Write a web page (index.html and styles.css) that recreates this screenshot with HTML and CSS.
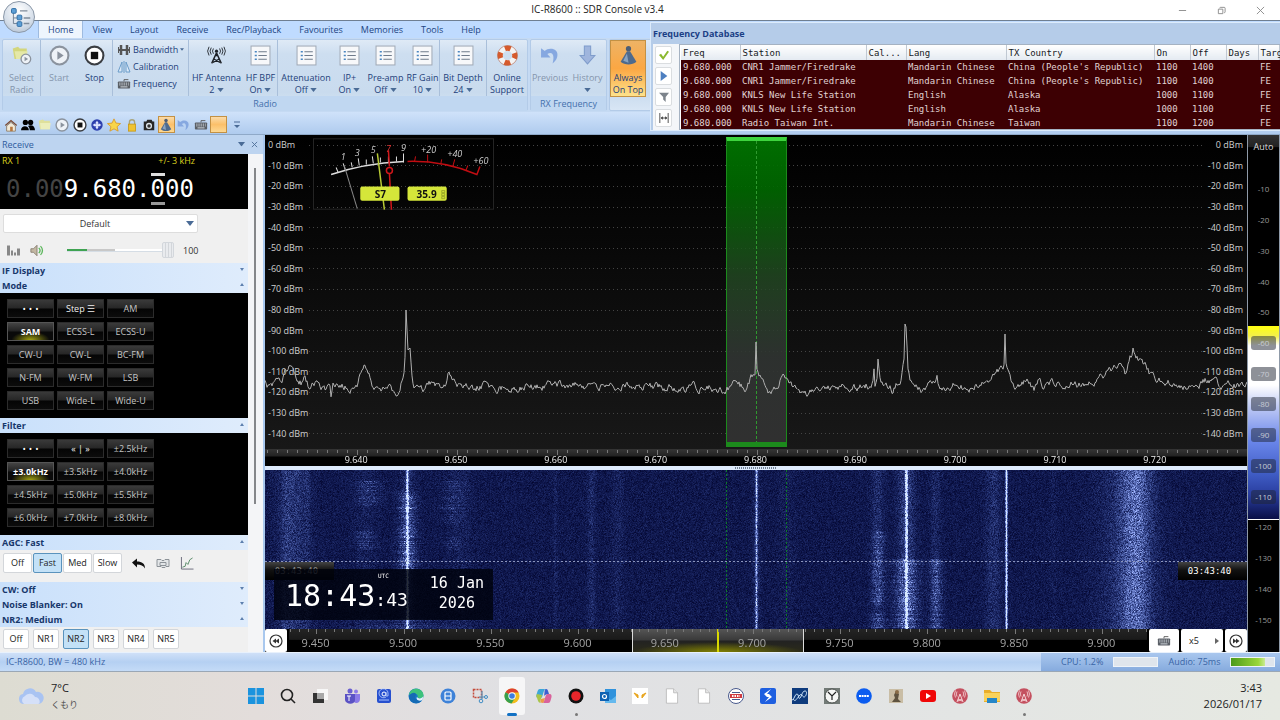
FILE: index.html
```html
<!DOCTYPE html>
<html lang="en">

<head>
    <meta charset="UTF-8">
    <meta name="viewport" content="width=device-width, initial-scale=1.0">
    <title>IC-R8600 :: SDR Console v3.4</title>
    <link rel="stylesheet" href="styles.css">
</head>

<body>
    <!-- shared icons -->
    <svg class="sprite" aria-hidden="true">
        <symbol id="i-list" viewBox="0 0 20 20">
            <rect x="1" y="1" width="18" height="18" fill="#f7f8fa" stroke="#a3acb8" />
            <path d="M8 6.500h8M8 10h8M8 13.500h8" stroke="#6f7b8b" />
            <path d="M4.500 6.500h2M4.500 10h2M4.500 13.500h2" stroke="#4a86c0" stroke-width="1.500" />
        </symbol>
        <symbol id="i-play" viewBox="0 0 20 20">
            <circle cx="10" cy="10" r="8.500" fill="#eef2f7" stroke="#8b939e" stroke-width="2" />
            <path d="M8 6l6 4-6 4z" fill="#8b939e" />
        </symbol>
        <symbol id="i-stop" viewBox="0 0 20 20">
            <circle cx="10" cy="10" r="8.500" fill="#fff" stroke="#3a3d42" stroke-width="2" />
            <rect x="6.500" y="6.500" width="7" height="7" fill="#111" />
        </symbol>
        <symbol id="i-keys" viewBox="0 0 16 12">
            <path d="M8 3V1h5" fill="none" stroke="#555" />
            <rect x="1" y="3" width="14" height="8" rx="1" fill="#5a5f66" />
            <path d="M2.500 5h11M2.500 7h11" stroke="#dfe5ec" stroke-dasharray="1.500 1" />
            <path d="M4 9.300h8" stroke="#dfe5ec" />
        </symbol>
        <symbol id="i-undo" viewBox="0 0 20 20">
            <path d="M1 3v9h9L7 8.500c4-2.500 7.500 0 5 9 6-4 7-14-2-14-2 0-4 .8-5.500 2.300z" fill="#86a8e0" />
        </symbol>
        <symbol id="i-pin" viewBox="0 0 20 20">
            <circle cx="10" cy="3.500" r="2.500" fill="#4d5e75" />
            <path d="M8.500 6h3l6 10c-4 3.500-11 3.500-15 0z" fill="#4e6a8d" />
            <path d="M8.500 8L5 15l5 2z" fill="#89a3c0" />
        </symbol>
        <symbol id="i-folder" viewBox="0 0 20 20">
            <path d="M1 4l6-2 2 2h8v12H3z" fill="#dfe09b" />
            <path d="M3 7h15l-1 9H4z" fill="#eceebb" />
        </symbol>
        <symbol id="i-down" viewBox="0 0 8 5">
            <path d="M0 0h8L4 5z" fill="#4a6b96" />
        </symbol>
        <symbol id="i-mast" viewBox="0 0 16 16">
            <circle cx="8" cy="8" r="7.800" fill="#c4505f" />
            <path d="M8 6l-3 8M8 6l3 8M6 11l4 2M10 11l-4 2" stroke="#f6d5d8" fill="none" />
            <path d="M5 3.500a5 5 0 0 0 0 5M11 3.500a5 5 0 0 1 0 5M3.500 2.500a7 7 0 0 0 0 7M12.500 2.500a7 7 0 0 1 0 7" stroke="#f6d5d8" fill="none" stroke-width=".8" />
        </symbol>
        <symbol id="i-page" viewBox="0 0 16 20">
            <path d="M1 1h9l5 5v13H1z" fill="#fff" stroke="#b5b5b5" />
            <path d="M10 1v5h5" fill="#e6e6e6" stroke="#b5b5b5" />
        </symbol>
    </svg>

    <header class="titlebar">
        <h1 class="title">IC-R8600 :: SDR Console v3.4</h1>
        <div class="win_buttons">
            <button type="button" aria-label="Minimize"><svg viewBox="0 0 10 10"><path d="M1 5h8" stroke="#888" /></svg></button>
            <button type="button" aria-label="Restore"><svg viewBox="0 0 10 10"><path d="M3 2.500a1 1 0 0 1 1-1h4a1 1 0 0 1 1 1v4a1 1 0 0 1-1 1M1.500 3.500h5v5h-5z" fill="none" stroke="#888" /></svg></button>
            <button type="button" aria-label="Close"><svg viewBox="0 0 10 10"><path d="M1 1l8 8M9 1l-8 8" stroke="#888" /></svg></button>
        </div>
        <button class="orb" type="button" aria-label="Application menu">
            <svg viewBox="0 0 32 32">
                <path d="M10 10v13h6M10 17h6" fill="none" stroke="#6e7f92" />
                <path d="M17 9.500h8M21 17h7M21 23h6" stroke="#7f8c9b" stroke-width="1.500" />
                <rect x="8" y="7" width="5" height="5" rx="1" fill="#5c9fd6" stroke="#2f6ca3" />
                <rect x="14" y="14" width="5" height="5" rx="1" fill="#5c9fd6" stroke="#2f6ca3" />
                <rect x="14" y="21" width="5" height="5" rx="1" fill="#5c9fd6" stroke="#2f6ca3" />
            </svg>
        </button>
    </header>

    <nav class="tabs">
        <a href="#" class="tab active">Home</a>
        <a href="#" class="tab">View</a>
        <a href="#" class="tab">Layout</a>
        <a href="#" class="tab">Receive</a>
        <a href="#" class="tab">Rec/Playback</a>
        <a href="#" class="tab">Favourites</a>
        <a href="#" class="tab">Memories</a>
        <a href="#" class="tab">Tools</a>
        <a href="#" class="tab">Help</a>
    </nav>

    <div class="ribbon">
        <section class="group">
            <div class="tools radio_tools">
                <button type="button" class="tool" disabled><svg class="icon" viewBox="0 0 24 22"><path d="M2 3l6-2 2 2h8v12H4z" fill="#d3d67c" /><path d="M4 6h15l-2 9H6z" fill="#e5e8a8" /><circle cx="17" cy="15" r="5.500" fill="#eef2f7" stroke="#8b939e" stroke-width="1.500" /><path d="M15.500 12.500l4 2.500-4 2.500z" fill="#8b939e" /></svg><span>Select</span><span>Radio</span></button>
                <button type="button" class="tool line" disabled><svg class="icon"><use href="#i-play" /></svg><span>Start</span></button>
                <button type="button" class="tool"><svg class="icon"><use href="#i-stop" /></svg><span>Stop</span></button>
                <div class="stack line">
                    <button type="button"><svg viewBox="0 0 14 12"><path d="M1 5h12v2H1z" fill="#555" /><path d="M4 1v10M10 1v10" stroke="#555" stroke-width="2.500" /><path d="M1.500 3v6M12.500 3v6" stroke="#555" /></svg>Bandwidth<svg class="tiny"><use href="#i-down" /></svg></button>
                    <button type="button"><svg viewBox="0 0 14 12"><path d="M1 11L5 1v10zM13 11L9 1v10z" fill="#dbe9f8" stroke="#6a9cc9" /><path d="M7 0v12" stroke="#6a9cc9" /></svg>Calibration</button>
                    <button type="button"><svg viewBox="0 0 16 12"><use href="#i-keys" /></svg>Frequency</button>
                </div>
                <button type="button" class="tool line"><svg class="icon" viewBox="0 0 24 24"><path d="M12 9L6.500 21M12 9l5.500 12M9 16l7 4M15 16l-7 4M10 12h4" stroke="#1c2026" stroke-width="1.600" fill="none" /><circle cx="12" cy="7" r="1.800" fill="#1c2026" /><path d="M8.500 4a5 5 0 0 0 0 6M15.500 4a5 5 0 0 1 0 6M6 3a7 7 0 0 0 0 8M18 3a7 7 0 0 1 0 8M3.500 2a9 9 0 0 0 0 10M20.500 2a9 9 0 0 1 0 10" stroke="#1c2026" fill="none" /></svg><span>HF Antenna</span><span>2 <svg class="caret"><use href="#i-down" /></svg></span></button>
                <button type="button" class="tool"><svg class="icon"><use href="#i-list" /></svg><span>HF BPF</span><span>On <svg class="caret"><use href="#i-down" /></svg></span></button>
                <button type="button" class="tool line"><svg class="icon"><use href="#i-list" /></svg><span>Attenuation</span><span>Off <svg class="caret"><use href="#i-down" /></svg></span></button>
                <button type="button" class="tool"><svg class="icon"><use href="#i-list" /></svg><span>IP+</span><span>On <svg class="caret"><use href="#i-down" /></svg></span></button>
                <button type="button" class="tool"><svg class="icon"><use href="#i-list" /></svg><span>Pre-amp</span><span>Off <svg class="caret"><use href="#i-down" /></svg></span></button>
                <button type="button" class="tool"><svg class="icon"><use href="#i-list" /></svg><span>RF Gain</span><span>10 <svg class="caret"><use href="#i-down" /></svg></span></button>
                <button type="button" class="tool line"><svg class="icon"><use href="#i-list" /></svg><span>Bit Depth</span><span>24 <svg class="caret"><use href="#i-down" /></svg></span></button>
                <button type="button" class="tool line"><svg class="icon" viewBox="0 0 20 20"><circle cx="10" cy="10" r="7" fill="none" stroke="#f3f3f3" stroke-width="5" /><circle cx="10" cy="10" r="7" fill="none" stroke="#d65a2c" stroke-width="5" stroke-dasharray="5.500 5.500" stroke-dashoffset="2.700" /><circle cx="10" cy="10" r="9.500" fill="none" stroke="#b5674c" stroke-width=".6" /></svg><span>Online</span><span>Support</span></button>
            </div>
            <h2 class="group_name">Radio</h2>
        </section>
        <section class="group">
            <div class="tools rx_tools">
                <button type="button" class="tool" disabled><svg class="icon"><use href="#i-undo" /></svg><span>Previous</span></button>
                <button type="button" class="tool" disabled><svg class="icon" viewBox="0 0 20 20"><path d="M7 1h6v9h4l-7 8-7-8h4z" fill="#9fb5dd" stroke="#7f9ccb" /></svg><span>History</span><span><svg class="caret"><use href="#i-down" /></svg></span></button>
            </div>
            <h2 class="group_name">RX Frequency</h2>
        </section>
        <section class="group">
            <div class="tools top_tools">
                <button type="button" class="tool pressed"><svg class="icon"><use href="#i-pin" /></svg><span>Always</span><span>On Top</span></button>
            </div>
        </section>
    </div>

    <div class="quickbar">
        <div class="quick_icons">
            <button type="button" aria-label="Home"><svg viewBox="0 0 16 16"><path d="M8 2l7 6-1 1-6-5-6 5-1-1z" fill="#7a4a35" /><path d="M3 9l5-4 5 4v6H3z" fill="#f2ead8" stroke="#8b7a66" /><path d="M7 10h3v5H7z" fill="#b5763f" /></svg></button>
            <button type="button" aria-label="Users"><svg viewBox="0 0 16 16"><circle cx="5" cy="5" r="3" /><circle cx="11" cy="5" r="3" /><path d="M0 14c0-6 9-6 9 0zM8 9c4-2 8 0 8 5h-6c0-2-.5-3.500-2-5z" /></svg></button>
            <button type="button" aria-label="Open"><svg viewBox="0 0 20 20"><use href="#i-folder" /></svg></button>
            <button type="button" aria-label="Start"><svg><use href="#i-play" /></svg></button>
            <button type="button" aria-label="Stop"><svg><use href="#i-stop" /></svg></button>
            <button type="button" aria-label="Centre"><svg viewBox="0 0 16 16"><circle cx="8" cy="8" r="6.500" fill="#2d3fae" /><path d="M8 3l2 3H9v1h1V6l3 2-3 2V9H9v1h1l-2 3-2-3h1V9H6v1L3 8l3-2v1h1V6H6z" fill="#dfe6ff" /></svg></button>
            <button type="button" aria-label="Favourite"><svg viewBox="0 0 16 16"><path d="M8 1l2.200 4.800 5.300.6-4 3.500 1.200 5.100L8 12.400 3.300 15l1.200-5.100-4-3.500 5.300-.6z" fill="#f8d54a" stroke="#d99a2b" /></svg></button>
            <button type="button" aria-label="Lock"><svg viewBox="0 0 16 16"><path d="M5 8V5a3 3 0 0 1 6 0v3" fill="none" stroke="#a8a47c" stroke-width="1.500" /><rect x="4" y="7" width="8" height="8" fill="#f0c330" stroke="#c79a1c" /></svg></button>
            <button type="button" aria-label="Snapshot"><svg viewBox="0 0 16 16"><path d="M2 4h3l1-2h5l1 2h2v10H2z" fill="#262626" /><circle cx="8" cy="9" r="3.500" fill="#dfe5ea" /><circle cx="8" cy="9" r="2" fill="#333" /></svg></button>
            <button type="button" class="pressed" aria-label="Always on top"><svg><use href="#i-pin" /></svg></button>
            <button type="button" aria-label="Undo"><svg><use href="#i-undo" /></svg></button>
            <button type="button" aria-label="Keyboard"><svg><use href="#i-keys" /></svg></button>
            <button type="button" class="pressed" aria-label="Blank"></button>
        </div>
        <svg class="more" viewBox="0 0 6 8"><path d="M0 1h6" stroke="#4a6b96" /><path d="M0 4h6L3 7z" fill="#4a6b96" /></svg>
    </div>

    <!-- floating database window -->
    <aside class="db">
        <h2 class="db_title">Frequency Database</h2>
        <div class="db_body">
            <div class="db_tools">
                <button type="button" aria-label="Accept"><svg viewBox="0 0 12 12"><path d="M0 6l2.500-1.500L5 8l5-7 2 1-7 10z" fill="#8ab82f" /></svg></button>
                <button type="button" aria-label="Play"><svg viewBox="0 0 12 12"><path d="M2 0l8 6-8 6z" fill="#4d7fc0" /></svg></button>
                <button type="button" aria-label="Filter"><svg viewBox="0 0 12 12"><path d="M0 1h12L8 6v6L5 9V6z" fill="#7d848c" /></svg></button>
                <button type="button" aria-label="Fit"><svg viewBox="0 0 12 12"><path d="M1 0v12M11 0v12M3 6h6" stroke="#333" fill="none" /><path d="M2 6l2.500-2v4zM10 6L7.500 4v4z" fill="#333" /></svg></button>
            </div>
            <div class="db_scroll">
                <table class="db_table">
                    <colgroup>
                        <col class="c_freq"><col class="c_station"><col class="c_call"><col class="c_lang"><col class="c_country"><col class="c_time"><col class="c_time"><col class="c_days"><col>
                    </colgroup>
                    <thead>
                        <tr><th>Freq</th><th>Station</th><th>Cal...</th><th>Lang</th><th>TX Country</th><th>On</th><th>Off</th><th>Days</th><th>Target</th></tr>
                    </thead>
                    <tbody>
                        <tr><td>9.680.000</td><td>CNR1 Jammer/Firedrake</td><td></td><td>Mandarin Chinese</td><td>China (People's Republic)</td><td>1100</td><td>1400</td><td></td><td>FE</td></tr>
                        <tr><td>9.680.000</td><td>CNR1 Jammer/Firedrake</td><td></td><td>Mandarin Chinese</td><td>China (People's Republic)</td><td>1100</td><td>1400</td><td></td><td>FE</td></tr>
                        <tr><td>9.680.000</td><td>KNLS New Life Station</td><td></td><td>English</td><td>Alaska</td><td>1000</td><td>1100</td><td></td><td>FE</td></tr>
                        <tr><td>9.680.000</td><td>KNLS New Life Station</td><td></td><td>English</td><td>Alaska</td><td>1000</td><td>1100</td><td></td><td>FE</td></tr>
                        <tr><td>9.680.000</td><td>Radio Taiwan Int.</td><td></td><td>Mandarin Chinese</td><td>Taiwan</td><td>1100</td><td>1200</td><td></td><td>FE</td></tr>
                    </tbody>
                </table>
            </div>
        </div>
    </aside>

    <main class="main">
        <section class="receive">
            <div class="dock_head">
                <h2>Receive</h2>
                <svg viewBox="0 0 8 5"><use href="#i-down" /></svg>
                <svg viewBox="0 0 8 8"><path d="M1 1l6 6M7 1L1 7" stroke="#4a6b96" /></svg>
            </div>
            <div class="dock_body">
                <div class="panels">
                    <div class="rx">
                        <div class="rx_info"><span>RX 1</span><span>+/- 3 kHz</span></div>
                        <div class="rx_freq"><span class="dim">0.00</span>9.680.<span class="step">0</span>00</div>
                    </div>
                    <div class="audio">
                        <div class="preset">
                            <select aria-label="Preset">
                                <option>Default</option>
                            </select>
                            <svg><use href="#i-down" /></svg>
                        </div>
                        <div class="volume">
                            <svg viewBox="0 0 14 12"><path d="M0 1h3v10H0zM4 6h2v5H4zM7 8h2v3H7zM10 4h3v7h-3z" fill="#888" /></svg>
                            <svg viewBox="0 0 16 14"><path d="M1 5h3l4-4v12L4 9H1z" fill="#c3b8a3" stroke="#857c6e" /><path d="M10 4c2 2 2 4 0 6M12 2c3 3 3 7 0 10" fill="none" stroke="#59b559" stroke-width="1.500" /></svg>
                            <input type="range" class="slider" aria-label="Volume" min="0" max="100" value="100">
                            <span>100</span>
                        </div>
                    </div>
                    <h3 class="fold">IF Display</h3>
                    <h3 class="fold open">Mode</h3>
                    <div class="pad">
                        <button type="button" class="dots"><span>•</span><span>•</span><span>•</span></button><button type="button" class="bright">Step ☰</button><button type="button">AM</button>
                        <button type="button" class="on">SAM</button><button type="button">ECSS-L</button><button type="button">ECSS-U</button>
                        <button type="button">CW-U</button><button type="button">CW-L</button><button type="button">BC-FM</button>
                        <button type="button">N-FM</button><button type="button">W-FM</button><button type="button">LSB</button>
                        <button type="button">USB</button><button type="button">Wide-L</button><button type="button">Wide-U</button>
                    </div>
                    <h3 class="fold open">Filter</h3>
                    <div class="pad">
                        <button type="button" class="dots"><span>•</span><span>•</span><span>•</span></button><button type="button" class="bright">« | »</button><button type="button">±2.5kHz</button>
                        <button type="button" class="on">±3.0kHz</button><button type="button">±3.5kHz</button><button type="button">±4.0kHz</button>
                        <button type="button">±4.5kHz</button><button type="button">±5.0kHz</button><button type="button">±5.5kHz</button>
                        <button type="button">±6.0kHz</button><button type="button">±7.0kHz</button><button type="button">±8.0kHz</button>
                    </div>
                    <h3 class="fold open">AGC: Fast</h3>
                    <div class="choices agc">
                        <button type="button">Off</button><button type="button" class="chosen">Fast</button><button type="button">Med</button><button type="button">Slow</button>
                        <svg viewBox="0 0 14 12"><path d="M0 5l5-4v3c5 0 8 2 8 7-2-3-4-4-8-4v3z" fill="#111" /></svg>
                        <svg viewBox="0 0 14 12"><path d="M1 2h4l1 1h2l1-1h4v7h-3l-1 1H6L5 9H1zM4 5h6v3H4z" fill="#e3e6e8" stroke="#8c9298" /></svg>
                        <svg viewBox="0 0 14 14"><path d="M1 0v13h13" fill="none" stroke="#667" /><path d="M2 11l3-1 1-4 2 2 2-5 3-2" fill="none" stroke="#586" /></svg>
                    </div>
                    <h3 class="fold">CW: Off</h3>
                    <h3 class="fold">Noise Blanker: On</h3>
                    <h3 class="fold open">NR2: Medium</h3>
                    <div class="choices nr">
                        <button type="button">Off</button><button type="button">NR1</button><button type="button" class="chosen">NR2</button><button type="button">NR3</button><button type="button">NR4</button><button type="button">NR5</button>
                    </div>
                </div>
                <div class="scrollbar"><i></i></div>
            </div>
        </section>

        <section class="display">
            <div class="spectrum">
                <div class="levels" id="levels"></div>
                <div class="passband"><i></i></div>
                <canvas id="trace"></canvas>
                <svg class="meter" viewBox="0 0 180 71">
                    <rect x=".5" y=".5" width="179" height="70" fill="none" stroke="#242424" />
                    <path d="M18 36Q50 25 90 23" fill="none" stroke="#ddd" stroke-width="1.500" />
                    <path d="M25 34l-2-5M32 31l-2-6M39 29l-1-5M46 27l-1-7M53 26v-5M60 25l-1-7M67 24v-5M75 24v-6M83 23v-5M90 24v-9" stroke="#ddd" fill="none" />
                    <path d="M94 23Q130 22 163 36l3-8" fill="none" stroke="#c00d12" stroke-width="1.500" />
                    <path d="M101 23l1-5M114 24v-8M127 26l1-5M139 28l2-7M152 32l2-5" stroke="#c00d12" fill="none" />
                    <path d="M31 27l13 43" stroke="#888" />
                    <path d="M64 15l7 56" stroke="#b9cb35" stroke-width="1.500" />
                    <path d="M75 12l1 16M76 35l2 36" stroke="#d0161a" stroke-width="1.500" />
                    <circle cx="76" cy="32" r="3" fill="none" stroke="#d0161a" stroke-width="1.500" />
                    <g class="meter_text">
                        <text x="30" y="22">1</text><text x="44" y="18">3</text><text x="60" y="15">5</text><text x="75" y="14" class="red">7</text><text x="90" y="13">9</text>
                        <text x="115" y="15">+20</text><text x="141" y="19">+40</text><text x="167" y="26">+60</text>
                    </g>
                    <rect x="47" y="48" width="39" height="14" rx="2" fill="#d5e63a" />
                    <rect x="94" y="48" width="39" height="14" rx="2" fill="#d5e63a" />
                    <g class="meter_value"><text x="67" y="59">S7</text><text x="113" y="59">35.9</text></g>
                    <path d="M128 52h3v2h-3zM128 55h3v2h-3zM128 58h3v2h-3z" fill="none" stroke="#7d8a20" stroke-width=".6" />
                </svg>
            </div>
            <div class="axis">
                <canvas id="ticks"></canvas>
                <div class="axis_labels"><span>9.640</span><span>9.650</span><span>9.660</span><span>9.670</span><span>9.680</span><span>9.690</span><span>9.700</span><span>9.710</span><span>9.720</span></div>
            </div>
            <div class="splitter"><i></i></div>
            <div class="waterfall">
                <canvas id="waterfall"></canvas>
                <div class="stamp left">03:43:40</div>
                <div class="stamp right">03:43:40</div>
                <div class="clock">
                    <div class="time"><small>UTC</small>18:43<span>:43</span></div>
                    <div class="date">16 Jan<br>2026</div>
                </div>
            </div>
            <div class="navigator">
                <button type="button" aria-label="Back"><svg viewBox="0 0 14 14"><circle cx="7" cy="7" r="6" fill="none" stroke="#333" stroke-width="1.200" /><path d="M7 4.500v5L3.500 7zM10 4.500v5L6.500 7z" fill="#333" /></svg></button>
                <div class="range">
                    <div class="window"><i></i></div>
                    <canvas id="range_ticks"></canvas>
                    <div class="range_labels"><span>9.450</span><span>9.500</span><span>9.550</span><span>9.600</span><span>9.650</span><span>9.700</span><span>9.750</span><span>9.800</span><span>9.850</span><span>9.900</span></div>
                </div>
                <button type="button" class="keys" aria-label="Keypad"><svg viewBox="0 0 16 12"><use href="#i-keys" /></svg></button>
                <button type="button" class="zoom"><span>x5</span><svg viewBox="0 0 4 6"><path d="M0 0l4 3-4 3z" fill="#666" /></svg></button>
                <button type="button" aria-label="Forward"><svg viewBox="0 0 14 14"><circle cx="7" cy="7" r="6" fill="none" stroke="#333" stroke-width="1.200" /><path d="M4 4.500v5L7.500 7zM7 4.500v5L10.500 7z" fill="#333" /></svg></button>
            </div>
        </section>

        <section class="scale">
            <button type="button" class="auto">Auto</button>
            <div class="scale_bar">
                <span>-10</span><span>-20</span><span>-30</span><span>-40</span><span>-50</span><span class="chip">-60</span><span class="chip">-70</span><span class="chip">-80</span><span class="chip">-90</span><span class="chip">-100</span><span class="chip">-110</span><span>-120</span><span>-130</span><span>-140</span><span>-150</span>
            </div>
        </section>
    </main>

    <footer class="status">
        <span>IC-R8600, BW = 480 kHz</span>
        <div class="load">
            <span>CPU: 1.2%</span><i class="bar"></i>
            <span>Audio: 75ms</span><i class="bar"><b></b></i>
        </div>
    </footer>

    <div class="taskbar">
        <div class="weather">
            <svg viewBox="0 0 26 18"><path d="M6 17a5 5 0 0 1-1-9.900A7 7 0 0 1 18 5a5.500 5.500 0 0 1 3 12z" fill="#a9c3f2" /><path d="M6 17a4.500 4.500 0 0 1 1-8 6 6 0 0 1 10 1c5 0 6 7 3 7z" fill="#d5e0f8" /></svg>
            <div>7°C<br><span>くもり</span></div>
        </div>
        <div class="apps">
            <button type="button" aria-label="Start"><svg viewBox="0 0 16 16"><path d="M0 0h7.500v7.500H0zM8.500 0H16v7.500H8.500zM0 8.500h7.500V16H0zM8.500 8.500H16V16H8.500z" fill="#1b93de" /></svg></button>
            <button type="button" aria-label="Search"><svg viewBox="0 0 16 16"><circle cx="7" cy="7" r="5.500" fill="none" stroke="#222" stroke-width="1.600" /><path d="M11 11l4 4" stroke="#222" stroke-width="1.600" /></svg></button>
            <button type="button" aria-label="Task view"><svg viewBox="0 0 16 16"><path d="M5 1h11v11H5z" fill="#f7f7f7" /><path d="M1 5h11v10H1z" fill="#333" /><path d="M5 5h7v6H5z" fill="#a8a8a8" /></svg></button>
            <button type="button" aria-label="Teams"><svg viewBox="0 0 16 16"><circle cx="6" cy="3" r="2.500" fill="#6a5fd0" /><circle cx="12" cy="3.500" r="2" fill="#8c7be8" /><path d="M9 6h7v5c0 4-4 5-6 3z" fill="#8c7be8" /><path d="M1 6h10v6c0 5-9 5-10 0z" fill="#5b52c4" /><path d="M3 8h4M5 8v5" stroke="#fff" /></svg></button>
            <button type="button" aria-label="Mail"><svg viewBox="0 0 16 16"><rect x="1" y="1" width="14" height="14" rx="2" fill="#2750cf" /><path d="M3 12h10" stroke="#a7c1ff" /><circle cx="8" cy="6" r="2" fill="none" stroke="#fff" /><path d="M10 4v4h2V5a4.500 4.500 0 1 0-2 4" fill="none" stroke="#bcd0ff" stroke-width=".8" /></svg></button>
            <button type="button" aria-label="Edge"><svg viewBox="0 0 16 16"><circle cx="8" cy="8" r="7.500" fill="#1577c8" /><path d="M1 7C2-2 16-1 15.500 8c0 3-5 3-6 1 1-3-3-5-8.500-2z" fill="#3dc27c" /><path d="M1 8c3-4 7-4 7-1-3 3 1 7 6 5-4 6-13 3-13-4z" fill="#156bb5" /><path d="M9 9c1 2 5 2 6.500-1l-1 4c-4 2-7-1-5.500-3z" fill="#e6f3fb" /></svg></button>
            <button type="button" aria-label="Binance"><svg viewBox="0 0 16 16"><circle cx="8" cy="8" r="7.500" fill="#3e82d8" /><rect x="5" y="4" width="6" height="8" rx="1" fill="none" stroke="#fff" stroke-width="1.200" /><path d="M5 8h6" stroke="#fff" /></svg></button>
            <button type="button" aria-label="Snipping tool"><svg viewBox="0 0 16 16"><rect x="1.500" y="1.500" width="8" height="8" fill="none" stroke="#c44b3b" stroke-width="1.500" stroke-dasharray="2 1" /><path d="M10 3v8M7 9h6" stroke="#5b8fb5" stroke-width="1.200" /><circle cx="9" cy="13" r="1.800" fill="none" stroke="#3f8cc4" /><circle cx="14" cy="9" r="1.500" fill="none" stroke="#3f8cc4" /></svg></button>
            <button type="button" class="current" aria-label="Chrome"><svg viewBox="0 0 16 16"><circle cx="8" cy="8" r="7.500" fill="#f2bd1d" /><path d="M8 8L1.500 4.200A7.500 7.500 0 0 1 14.700 4.500H8z" fill="#dd4132" /><path d="M8 8L1.500 4.200A7.500 7.500 0 0 0 7.500 15.500L11 10z" fill="#36a04f" /><circle cx="8" cy="8" r="3.700" fill="#fff" /><circle cx="8" cy="8" r="2.800" fill="#3c7ce0" /></svg></button>
            <button type="button" aria-label="Copilot"><svg viewBox="0 0 16 16"><path d="M4 1h6c-2 0-2 2-3 5s-1 4-3 4H3C0 10 0 8 1 5s1-4 3-4z" fill="#3ca6d8" /><path d="M1 6l5 1-1 4c-1 2-1 3 0 4-3 0-3-3-4-5s-1-2 0-4z" fill="#a9c44a" /><path d="M12 15H6c2 0 2-2 3-5s1-4 3-4h1c3 0 3 2 2 5s-1 4-3 4z" fill="#d9629c" /><path d="M6 15c2 0 2-2 3-5l-4 1c-1 2-1 3 1 4z" fill="#eb9a48" /><path d="M10 1c2 0 2 2 3 5h-1c-2 0-3 1-4 2 1-4 0-7 2-7z" fill="#3b5fd0" /></svg></button>
            <button type="button" class="open" aria-label="Recorder"><svg viewBox="0 0 16 16"><circle cx="8" cy="8" r="7.500" fill="#111" /><circle cx="8" cy="8" r="4.800" fill="#e8262b" /></svg></button>
            <button type="button" aria-label="Outlook"><svg viewBox="0 0 16 16"><path d="M5 1h11v14H5z" fill="#2f92dc" /><path d="M5 9l6 3 5-4v7H5z" fill="#65b9ee" /><rect x="0" y="4" width="9" height="9" fill="#0f62b2" /><circle cx="4.500" cy="8.500" r="2" fill="none" stroke="#fff" stroke-width="1.200" /></svg></button>
            <button type="button" aria-label="Viewer"><svg viewBox="0 0 16 16"><path d="M0 0h16v16H0z" fill="#fff" /><path d="M2 5l4 5V7zM14 5l-4 5V7z" fill="#e8a51d" stroke="#e8a51d" /></svg></button>
            <button type="button" aria-label="Document"><svg><use href="#i-page" /></svg></button>
            <button type="button" aria-label="Document"><svg><use href="#i-page" /></svg></button>
            <button type="button" aria-label="DX"><svg viewBox="0 0 16 16"><circle cx="8" cy="8" r="7.500" fill="#fff" stroke="#48598c" /><path d="M2 6h12v4H2z" fill="#d03b40" /><path d="M4 8h8" stroke="#fff" stroke-dasharray="1.500 1" stroke-width="2" /><path d="M4 4.500h8M4 11.500h8" stroke="#48598c" /></svg></button>
            <button type="button" aria-label="Sync"><svg viewBox="0 0 16 16"><rect x="0" y="0" width="16" height="16" rx="2" fill="#1e5fe0" /><path d="M11 1L4 6l3 3h2l-4 5 7-5-3-3H7z" fill="#fff" /></svg></button>
            <button type="button" aria-label="Wave"><svg viewBox="0 0 16 16"><path d="M0 0h16v16H0z" fill="#0e3b7d" /><path d="M0 12c2 0 3-6 5-6s1 6 3 4 2-7 5-7 1 6-1 6-2-5-5-1-4 6-6 3" fill="none" stroke="#cfe6fa" /></svg></button>
            <button type="button" aria-label="Timer"><svg viewBox="0 0 16 16"><path d="M0 0h16v16H0z" fill="#727a76" /><circle cx="8" cy="8" r="7" fill="#f5f6f4" stroke="#4b504d" /><path d="M4 4l4 4 4-4M8 8v4" fill="none" stroke="#222" stroke-width="1.200" /></svg></button>
            <button type="button" aria-label="Zoom"><svg viewBox="0 0 16 16"><circle cx="8" cy="8" r="7.800" fill="#0b5cf0" /><path d="M3 8h10" stroke="#fff" stroke-width="2" stroke-dasharray="2 .6" /></svg></button>
            <button type="button" aria-label="Picture"><svg viewBox="0 0 16 16"><path d="M1 1h14v14H1z" fill="#c9bda5" /><path d="M8 3l3 3-1 5 3 3H4l3-4-1-3z" fill="#5e523f" /><circle cx="9" cy="4" r="2" fill="#8a6c48" /></svg></button>
            <button type="button" aria-label="YouTube"><svg viewBox="0 0 16 16"><rect x="0" y="2" width="16" height="12" rx="3" fill="#f00707" /><path d="M6 5l5 3-5 3z" fill="#fff" /></svg></button>
            <button type="button" aria-label="SDR Console"><svg><use href="#i-mast" /></svg></button>
            <button type="button" aria-label="Explorer"><svg viewBox="0 0 16 16"><path d="M0 2h6l2 2h8v10H0z" fill="#e9ae2a" /><path d="M0 5h16v8H0z" fill="#fad25a" /><path d="M3 10h10v5H3z" fill="#2586c8" /></svg></button>
            <button type="button" class="open" aria-label="SDR Console"><svg><use href="#i-mast" /></svg></button>
        </div>
        <div class="now">3:43<br>2026/01/17</div>
    </div>
    <script src="spectrum.js"></script>
</body>

</html>
```

FILE: styles.css
```css
* {
    margin: 0;
    padding: 0;
    box-sizing: border-box;
}

body {
    display: flex;
    flex-direction: column;
    min-height: 100vh;
    position: relative;
    overflow-x: hidden;
    font: 9px/12px "Open Sans", "Noto Sans CJK JP", sans-serif;
    color: #1e3f7a;
    background: #bdd5f3;
}

button,
select {
    font: inherit;
    color: inherit;
    border: 0;
    background: none;
}

button {
    display: flex;
    align-items: center;
    justify-content: center;
}

h1,
h2,
h3 {
    font-size: inherit;
    font-weight: normal;
}

i {
    display: block;
}

.sprite {
    position: absolute;
    width: 0;
    height: 0;
}

/* title bar */
.titlebar {
    position: relative;
    display: flex;
    height: 20px;
    padding-left: 32px;
    background: #fff;
}

.title {
    flex: 1;
    text-align: center;
    font-size: 10px;
    line-height: 19px;
    color: #222;
}

.win_buttons {
    display: flex;
}

.win_buttons button {
    width: 39px;
}

.win_buttons svg {
    width: 9px;
    height: 9px;
}

.orb {
    position: absolute;
    left: 3px;
    top: 1px;
    z-index: 2;
    width: 32px;
    height: 32px;
    border: 1px solid #8b98a8;
    border-radius: 50%;
    background: radial-gradient(circle at 50% 30%, #fff, #d5dee9 60%, #a8b8cb);
}

.orb svg {
    width: 30px;
}

/* tabs */
.tabs {
    display: flex;
    height: 18px;
    padding-left: 38px;
    border-top: 1px solid #6f7f92;
    background: #bfdbff;
}

.tab {
    padding: 0 9px;
    line-height: 17px;
    color: #1d4583;
    text-decoration: none;
}

.tab.active {
    background: #eef5fd;
    border: 1px solid #9ebbe0;
    border-width: 0 1px;
}

/* ribbon */
.ribbon {
    display: flex;
    gap: 2px;
    height: 74px;
    padding: 1px 2px;
    background: #c5daf3;
}

.group {
    display: flex;
    flex-direction: column;
    border: 1px solid #b3cbe8;
    border-radius: 2px;
    background: linear-gradient(#dfeaf6, #cddef0 20%, #c9dbee 75%, #d8e6f5);
}

.group:last-child {
    flex: 1;
}

.tools {
    display: grid;
    height: 56px;
}

.radio_tools {
    grid-template-columns: 37px 37px 35px 76px 56px 33px 57px 31px 41px 33px 47px 41px;
}

.rx_tools {
    grid-template-columns: 38px 37px;
}

.top_tools {
    grid-template-columns: 36px;
}

.tool {
    flex-direction: column;
    justify-content: flex-start;
    padding-top: 5px;
    white-space: nowrap;
}

.tool .icon {
    width: 21px;
    height: 21px;
    margin-bottom: 6px;
    flex: none;
}

.tool:disabled {
    color: #8595ac;
}

.line {
    border-left: 1px solid #a9bfda;
}

.caret {
    width: 7px;
    height: 4px;
    vertical-align: 1px;
}

.tool.pressed,
.quick_icons .pressed {
    border: 1px solid #c39144;
    background: linear-gradient(#eeb365, #fba743 50%, #fee28b);
}

.tool.pressed {
    padding-top: 4px;
}

.stack {
    display: flex;
    flex-direction: column;
    padding: 1px 0 0 4px;
}

.stack button {
    justify-content: flex-start;
    gap: 2px;
    height: 17px;
}

.stack svg {
    width: 14px;
    height: 12px;
    flex: none;
}

.stack .tiny {
    width: 4px;
    height: 3px;
}

.group_name {
    flex: 1;
    text-align: center;
    line-height: 15px;
    color: #4470ac;
    background: #c0d7f1;
}

/* quick access bar */
.quickbar {
    display: flex;
    align-items: center;
    height: 23px;
    padding: 4px 2px 1px;
    border-bottom: 1px solid #8fa9c8;
    background: linear-gradient(#cfe2fa, #afcbee);
}

.quick_icons {
    display: flex;
    justify-content: space-between;
    width: 225px;
}

.quick_icons button {
    width: 17px;
    height: 17px;
}

.quick_icons svg {
    width: 14px;
    height: 14px;
}

.quick_icons .pressed {
    background: linear-gradient(#fbdba9, #fcc06a 50%, #fdd892);
}

.more {
    width: 6px;
    margin-left: 7px;
}

/* frequency database */
.db {
    position: absolute;
    left: 650px;
    right: 0;
    top: 22px;
    height: 109px;
    padding: 1px 0 2px 2px;
    border: 1px solid #dcebfb;
    border-right: 0;
    background: #b5cce9;
}

.db_title {
    line-height: 20px;
    font-weight: bold;
    color: #1b3f86;
}

.db_body {
    display: flex;
    height: 86px;
    background: #f4f6f9;
}

.db_tools {
    display: flex;
    flex-direction: column;
    gap: 3px;
    width: 26px;
    padding: 2px;
}

.db_tools button {
    width: 17px;
    height: 18px;
    border: 1px solid #dadde0;
    border-radius: 2px;
    background: #fff;
}

.db_tools svg {
    width: 10px;
}

.db_scroll {
    flex: 1;
    min-width: 0;
    overflow: hidden;
    border: 1px solid #a5b2c2;
    border-right: 0;
    padding-left: 1px;
    background: #fff;
}

.db_table {
    width: 100%;
    table-layout: fixed;
    border-collapse: collapse;
    font: 9px/14px "DejaVu Sans Mono", monospace;
    white-space: nowrap;
    color: #e0d2d2;
    background: #3d0003;
}

.db_table th {
    height: 15px;
    padding-left: 2px;
    text-align: left;
    font-weight: normal;
    color: #16191d;
    border-right: 1px solid #c0c8d2;
    background: linear-gradient(#fff, #e4eaf1);
}

.db_table td {
    padding-left: 2px;
    height: 14px;
}

.c_freq {
    width: 59px;
}

.c_station {
    width: 126px;
}

.c_call {
    width: 40px;
}

.c_lang {
    width: 100px;
}

.c_country {
    width: 148px;
}

.c_time {
    width: 36px;
}

.c_days {
    width: 32px;
}

/* main area */
.main {
    flex: 1;
    display: grid;
    grid-template-columns: 265px 1fr 33px;
}

.receive {
    display: flex;
    flex-direction: column;
    border-right: 2px solid #a9c8ee;
    background: #f0f0f0;
}

.dock_head {
    display: flex;
    align-items: center;
    gap: 6px;
    height: 19px;
    padding: 0 5px 0 2px;
    color: #2f5c9e;
    background: #bdd4f0;
}

.dock_head h2 {
    flex: 1;
}

.dock_head svg {
    width: 7px;
}

.dock_body {
    flex: 1;
    display: flex;
}

.panels {
    flex: 1;
}

.scrollbar {
    width: 15px;
    padding: 14px 6px;
    background: #f4f5f7;
}

.scrollbar i {
    width: 2px;
    height: 336px;
    background: #85878a;
}

.rx {
    height: 55px;
    background: #000;
}

.rx_info {
    display: flex;
    justify-content: space-between;
    padding: 1px 53px 0 2px;
    color: #d9cf1e;
}

.rx_freq {
    padding: 8px 0 0 6px;
    font: 24px/28px "DejaVu Sans Mono", monospace;
    color: #fff;
}

.rx_freq .dim {
    color: #444;
}

.rx_freq .step {
    padding: 2px 0;
    background: linear-gradient(#ddd, #ddd) top / 100% 3px no-repeat, linear-gradient(#999, #999) bottom / 100% 3px no-repeat;
}

.audio {
    height: 54px;
    padding: 5px 3px 0;
    color: #333;
}

.preset {
    display: flex;
    align-items: center;
    width: 195px;
    height: 19px;
    padding-right: 3px;
    border: 1px solid #ddd;
    border-radius: 2px;
    background: #fff;
}

.preset select {
    appearance: none;
    flex: 1;
    text-align-last: center;
}

.preset svg {
    width: 8px;
    height: 5px;
}

.volume {
    display: flex;
    align-items: center;
    height: 35px;
    padding-left: 4px;
}

.volume svg {
    width: 14px;
    height: 13px;
    margin-right: 9px;
}

.slider {
    appearance: none;
    width: 107px;
    height: 18px;
    margin: 0 9px 0 14px;
    background: none;
}

.slider::-webkit-slider-runnable-track {
    height: 3px;
    background: linear-gradient(90deg, #3fa352 20px, #c8c8c8 20px, #c8c8c8 48px, #fff 48px);
    border-bottom: 1px solid #d5dde5;
}

.slider::-webkit-slider-thumb {
    appearance: none;
    width: 12px;
    height: 16px;
    margin-top: -7px;
    border: 1px solid #d3d7dc;
    border-radius: 2px;
    background: repeating-linear-gradient(90deg, #e9ebee 0 2px, #d3d6da 2px 3px);
}

.fold {
    display: flex;
    justify-content: space-between;
    height: 15px;
    padding: 0 4px 0 2px;
    font-weight: bold;
    line-height: 15px;
    color: #17376b;
    background: linear-gradient(90deg, #c9e0fb, #dfecfc);
}

.fold::after {
    content: "";
    margin-top: 5px;
    width: 0;
    height: 0;
    border: 2px solid transparent;
    border-top: 3px solid #5d7fae;
}

.fold.open::after {
    margin-top: 3px;
    border: 2px solid transparent;
    border-bottom: 3px solid #5d7fae;
}

.pad {
    display: grid;
    grid-template-columns: repeat(3, 47px);
    grid-auto-rows: 19px;
    gap: 4px 3px;
    padding: 6px 7px 8px;
    background: #000;
}

.pad button {
    border: 1px solid #2c2c2c;
    color: #c4c4c4;
    background: linear-gradient(#3a3a3a, #262626 48%, #050505 52%, #0c0c0c);
}

.pad .on {
    font-weight: bold;
    color: #fff;
    border-color: #555;
    background: radial-gradient(ellipse at 50% 100%, #a0a010, transparent 60%) bottom / 100% 10px no-repeat, linear-gradient(#444, #222 48%, #0a0a0a 52%);
}

.pad .dots {
    gap: 3px;
    color: #fff;
}

.pad .bright {
    color: #f0f0f0;
}

.choices {
    display: flex;
    align-items: center;
    padding-left: 3px;
    color: #222;
}

.choices button {
    width: 29px;
    height: 20px;
    border: 1px solid #d3d6da;
    border-radius: 2px;
    background: #fff;
}

.choices .chosen {
    border-color: #5a93bd;
    background: #c3e1f7;
}

.agc {
    gap: 1px;
    height: 32px;
    padding-bottom: 6px;
}

.agc svg {
    width: 14px;
    height: 13px;
    margin-left: 9px;
}

.nr {
    gap: 4px;
    height: 24px;
}

.nr button {
    width: 26px;
}

/* spectrum and waterfall */
.display {
    display: flex;
    flex-direction: column;
    min-width: 0;
    color: #d0d0d0;
    background: #000;
}

canvas {
    position: absolute;
    inset: 0;
    width: 100%;
    height: 100%;
}

.spectrum {
    position: relative;
    flex: 1;
    display: flex;
    padding-bottom: 5px;
    background: linear-gradient(#000, #080808 35%, #181818);
}

.levels {
    flex: 1;
    display: grid;
    grid-auto-rows: 1fr;
}

.level {
    display: flex;
    align-items: center;
    padding: 0 4px 0 3px;
}

.level i {
    flex: 1;
    height: 1px;
    background: repeating-linear-gradient(90deg, #444 0 1px, transparent 1px 4px);
}

.level span {
    width: 41px;
}

.level span:last-child {
    text-align: right;
}

.passband {
    position: absolute;
    left: 50%;
    top: 2px;
    bottom: 2px;
    width: 61px;
    margin-left: -30px;
    border: 1px solid #1c8a1c;
    border-width: 4px 1px 5px;
    border-top-color: #3ed43e;
    background: linear-gradient(rgba(0, 115, 0, .95), rgba(0, 105, 0, .9) 16%, rgba(35, 75, 35, .8) 45%, rgba(48, 52, 50, .9) 72%, #303030);
}

.passband i {
    width: 1px;
    height: 100%;
    margin: 0 auto;
    background: repeating-linear-gradient(#2f9a2f 0 3px, transparent 3px 5px);
}

.meter {
    position: absolute;
    left: 48px;
    top: 3px;
    width: 181px;
    height: 72px;
}

.meter_text {
    font-size: 9px;
    font-style: italic;
    text-anchor: middle;
    fill: #ccc;
}

.meter_text .red {
    fill: #d33;
}

.meter_value {
    font-size: 10px;
    font-weight: bold;
    text-anchor: middle;
    fill: #111;
}

.axis {
    position: relative;
    height: 17px;
    border-top: 1px solid #333;
    background: linear-gradient(#333, #222 6px, #000 7px);
}

.axis_labels {
    position: relative;
    display: grid;
    grid-template-columns: repeat(9, 1fr);
    padding: 4px 4% 0;
    margin: 0 3px 0 2px;
    line-height: 11px;
    text-align: center;
    color: #eee;
}

.splitter {
    height: 4px;
    padding-top: 1px;
    background: #dce9fa;
}

.splitter i {
    width: 42px;
    height: 2px;
    margin: 0 auto;
    background: repeating-linear-gradient(90deg, #6f7f92 0 1px, transparent 1px 2px);
}

.waterfall {
    position: relative;
    height: 159px;
    font-family: "DejaVu Sans Mono", monospace;
}

.stamp {
    position: absolute;
    top: 92px;
    width: 69px;
    height: 18px;
    line-height: 18px;
    text-align: center;
    color: #fff;
    background: linear-gradient(#444, #111 45%, #000);
}

.stamp.left {
    left: 0;
    padding-right: 6px;
    color: #888;
}

.stamp.right {
    right: 0;
    padding-right: 6px;
}

.clock {
    position: absolute;
    left: 9px;
    top: 99px;
    display: flex;
    justify-content: space-between;
    width: 219px;
    height: 51px;
    padding: 4px 9px 0 11px;
    color: #fff;
    background: rgba(0, 3, 12, .82);
}

.time {
    position: relative;
    font-size: 30px;
    line-height: 46px;
}

.time span {
    font-size: 18px;
}

.time small {
    position: absolute;
    left: 93px;
    top: -2px;
    font-size: 6px;
    line-height: 10px;
}

.date {
    font-size: 15px;
    line-height: 20px;
    text-align: center;
}

.navigator {
    display: flex;
    gap: 2px;
    height: 23px;
}

.navigator button {
    width: 22px;
    border-radius: 2px;
    color: #222;
    background: #fff;
}

.navigator button svg {
    width: 14px;
    height: 14px;
}

.navigator .keys {
    width: 30px;
}

.navigator .zoom {
    width: 42px;
    gap: 16px;
    padding-left: 4px;
}

.navigator .zoom svg {
    width: 4px;
    height: 6px;
}

.range {
    position: relative;
    flex: 1;
    overflow: hidden;
    background: linear-gradient(#242424, #1a1a1a 45%, #000 50%);
}

.range_labels {
    position: relative;
    display: grid;
    grid-template-columns: repeat(10, 1fr);
    margin: 0 2px 0 -17px;
    padding-top: 6px;
    font-size: 11px;
    line-height: 15px;
    text-align: center;
    color: #a5a5a5;
}

.window {
    position: absolute;
    left: 40%;
    top: 0;
    bottom: 0;
    width: 20%;
    border: 1px solid #ddd;
    border-width: 0 1px;
    background: radial-gradient(ellipse at 50% 100%, rgba(140, 140, 0, .9), transparent 70%) bottom / 100% 10px no-repeat, linear-gradient(#555, #3a3a3a 48%, #222 52%, #2b2b1a);
}

.window i {
    width: 2px;
    height: 100%;
    margin: 0 auto;
    background: #d8d800;
}

/* colour scale */
.scale {
    display: flex;
    flex-direction: column;
    border: 1px solid #8f9aa8;
    border-width: 0 1px;
    background: #000;
}

.auto {
    height: 23px;
    color: #ddd;
    background: linear-gradient(#333, #222 50%, #000 55%);
}

.scale_bar {
    flex: 1;
    display: grid;
    grid-template-rows: repeat(15, 1fr);
    align-items: center;
    padding: 16px 3px 17px;
    font-size: 8px;
    text-align: center;
    color: #999;
    background: linear-gradient(#000 34%, #ffff10 34%, #f3f04a 36%, #fff 38%, #fff 46%, #c3cdf5 50%, #6c88ec 57%, #3f5cc4 64%, #2a3ea0 68%, #0a1048 73%, #fff 73%, #fff 73.300%, #000 73.300%);
}

.chip {
    height: 14px;
    line-height: 14px;
    border-radius: 3px;
    color: #c8ccd4;
    background: rgba(30, 35, 50, .5);
}

/* status bar */
.status {
    display: flex;
    justify-content: space-between;
    height: 20px;
    padding-left: 6px;
    border-top: 1px solid #e8f1fc;
    border-bottom: 1px solid #9aa7b5;
    line-height: 18px;
    color: #3964a5;
    background: linear-gradient(#cfe0f8, #b5d0f2 50%, #c4dbf7);
}

.load {
    display: flex;
    align-items: center;
    gap: 10px;
    width: 239px;
    padding-left: 20px;
    background: linear-gradient(#a9c7ee, #86abde);
}

.bar {
    width: 45px;
    height: 10px;
    border: 1px solid #eef3f8;
    background: #dfe5ec;
}

.bar b {
    display: block;
    width: 78%;
    height: 8px;
    background: linear-gradient(90deg, #4c9a1a, #9ad63a 80%, #c9eb93);
}

/* windows taskbar */
.taskbar {
    display: grid;
    grid-template-columns: 1fr auto 1fr;
    height: 48px;
    font-size: 11px;
    line-height: 16px;
    color: #222;
    background: linear-gradient(90deg, #dddcd2, #e3dddb 20%, #e0e0e3 40%, #e3e5e4 75%, #e6e9e2);
}

.weather {
    display: flex;
    align-items: center;
    gap: 7px;
    padding-left: 18px;
}

.weather svg {
    width: 26px;
    height: 18px;
}

.weather span {
    font-size: 9px;
    color: #555;
}

.apps {
    display: flex;
    align-items: center;
}

.apps button {
    position: relative;
    width: 32px;
    height: 38px;
}

.apps svg {
    width: 16px;
    height: 16px;
}

.apps .current {
    width: 26px;
    margin: 0 3px;
    border-radius: 3px;
    background: #f6f6f7;
}

.apps .open::after,
.apps .current::after {
    content: "";
    position: absolute;
    bottom: -1px;
    width: 3px;
    height: 3px;
    border-radius: 2px;
    background: #777;
}

.apps .current::after {
    width: 10px;
    background: #1271c4;
}

.now {
    align-self: center;
    padding-right: 18px;
    text-align: right;
}
```

FILE: spectrum.js
```js
var seed = 8600;
// repeatable noise, 0..1
function rand() {
    seed = (seed * 1103515245 + 12345) % 2147483648;
    return seed / 2147483648;
}

function setup(id) {
    var canvas = document.getElementById(id);
    canvas.width = canvas.clientWidth;
    canvas.height = canvas.clientHeight;
    return canvas;
}

// dBm rows
var levels = document.getElementById('levels');
for (var db = 0; db >= -140; db -= 10) {
    var row = document.createElement('div');
    row.className = 'level';
    row.innerHTML = '<span>' + db + ' dBm</span><i></i><span>' + db + ' dBm</span>';
    levels.appendChild(row);
}

// trace: x in px from the left of a 982px plot, y from the top of a 314px plot
var points = [
    [0, 247], [5, 252], [15, 248], [20, 238], [24, 234], [28, 240], [34, 246], [37, 248], [40, 241], [43, 250], [50, 248],
    [60, 253], [65, 251], [66, 260], [68, 250], [80, 251], [90, 253], [93, 250], [96, 236], [99, 229], [104, 237], [107, 249],
    [116, 252], [122, 250], [128, 258], [131, 260], [135, 253], [139, 237], [140, 220], [141, 175], [143, 215], [145, 213],
    [147, 240], [149, 252], [157, 255], [165, 249], [175, 253], [181, 248], [183, 234], [186, 240], [190, 249], [200, 254],
    [215, 251], [240, 252], [270, 252], [300, 250], [330, 252], [360, 250], [400, 252], [435, 252], [445, 250], [450, 258],
    [462, 253], [470, 249], [480, 253], [486, 243], [490, 237], [491, 207], [492, 235], [495, 239], [499, 243], [501, 253],
    [504, 257], [510, 251], [515, 245], [521, 244], [525, 251], [539, 258], [547, 255], [558, 248], [570, 253], [580, 249],
    [592, 253], [603, 250], [608, 247], [609, 235], [610, 249], [612, 246], [613, 227], [615, 245], [620, 249], [627, 255],
    [635, 245], [638, 228], [639, 226], [640, 189], [641, 192], [643, 230], [645, 246], [650, 251], [656, 257], [665, 249],
    [672, 242], [673, 247], [680, 252], [690, 248], [700, 254], [710, 252], [718, 243], [725, 241], [731, 235], [738, 237],
    [739, 233], [740, 199], [741, 231], [746, 251], [755, 252], [763, 243], [769, 254], [775, 243], [777, 251], [785, 248],
    [795, 246], [805, 249], [815, 250], [825, 248], [835, 244], [840, 240], [845, 237], [855, 234], [860, 239], [865, 224],
    [867, 222], [868, 213], [870, 221], [875, 227], [881, 233], [886, 241], [895, 245], [905, 246], [915, 253], [925, 252],
    [940, 246], [945, 245], [953, 251], [965, 249], [975, 251], [982, 246]
];

function drawTrace() {
    var canvas = setup('trace');
    var ctx = canvas.getContext('2d');
    var sx = canvas.width / 982;
    var sy = canvas.height / 314;
    ctx.strokeStyle = '#b0b0b0';
    ctx.lineWidth = 1;
    ctx.beginPath();
    var k = 0, drift = 0;
    for (var x = 0; x <= 982; x++) {
        while (k < points.length - 2 && points[k + 1][0] < x) k++;
        var a = points[k], b = points[k + 1];
        var y = a[1] + (b[1] - a[1]) * (x - a[0]) / (b[0] - a[0]);
        drift = drift * 0.72 + (rand() - 0.5) * 6.5;
        if (y > 215) y += drift;
        ctx.lineTo(x * sx, y * sy);
    }
    ctx.stroke();
}

// ruler marks along the top edge of a canvas
function drawTicks(id, start, step, color) {
    var canvas = setup(id);
    var ctx = canvas.getContext('2d');
    ctx.fillStyle = color;
    for (var i = 0; start + i * step < canvas.width; i++) {
        ctx.fillRect(Math.round(start + i * step), 0, 1, i % 10 === 0 ? 5 : 3);
    }
}

// [x, width, strength]
var carriers = [
    [28, 14, 0.14], [20, 4, 0.06], [42, 3, 0.06], [100, 10, 0.04], [142, 1, 1.1], [142, 6, 0.12], [195, 12, 0.04],
    [290, 2, 0.05], [326, 4, 0.08], [352, 6, 0.05], [491, 1, 0.6], [491, 4, 0.07], [521, 8, 0.03], [612, 6, 0.1],
    [641, 1, 1.3], [641, 8, 0.18], [670, 5, 0.08], [728, 8, 0.1], [741, 1, 1], [870, 14, 0.26], [863, 28, 0.12], [788, 3, 0.03]
];
// [x, width, top, bottom, strength] of patchy modulation
var patches = [
    [104, 12, 10, 36, 0.2], [188, 12, 10, 55, 0.14], [100, 10, 60, 80, 0.16], [142, 9, 20, 100, 0.34], [188, 8, 66, 80, 0.12],
    [613, 6, 60, 136, 0.24], [641, 12, 88, 158, 0.34], [671, 6, 88, 158, 0.28], [613, 8, 142, 158, 0.22], [142, 50, 148, 159, 0.14]
];

function drawWaterfall() {
    var canvas = setup('waterfall');
    var ctx = canvas.getContext('2d');
    var w = canvas.width, h = canvas.height;
    var img = ctx.createImageData(w, h);
    var profile = [];
    for (var x = 0; x < w; x++) {
        var px = x * 982 / w;
        var v = 0.13;
        carriers.forEach(function (c) {
            var d = (px - c[0]) / c[1];
            v += c[2] * Math.exp(-d * d);
        });
        profile.push(v);
    }
    for (var y = 0; y < h; y++) {
        var burst = 0.2 + 0.9 * rand();
        for (x = 0; x < w; x++) {
            px = x * 982 / w;
            v = profile[x];
            patches.forEach(function (p) {
                var d = (px - p[0]) / p[1];
                if (Math.abs(d) < 2 && y > p[2] && y < p[3]) {
                    v += p[4] * burst * Math.exp(-d * d) * (0.4 + rand());
                }
            });
            v = Math.min(1, v * (0.3 + 0.7 * (rand() + rand())) + rand() * 0.08);
            if (profile[x] > 0.9) v = Math.max(v, 0.85);
            var i = (y * w + x) * 4;
            img.data[i] = 255 * Math.pow(v, 1.5) * 0.85;
            img.data[i + 1] = 255 * Math.pow(v, 1.3) * 0.92;
            img.data[i + 2] = Math.min(255, 30 + 275 * v);
            img.data[i + 3] = 255;
        }
    }
    ctx.putImageData(img, 0, 0);
    // minute marker
    ctx.fillStyle = '#8a94bc';
    for (x = 0; x < w; x += 4) ctx.fillRect(x, 91, 2, 1);
    // passband edges
    ctx.fillStyle = '#0c7b28';
    for (y = 0; y < h; y += 4) {
        ctx.fillRect(w / 2 - 30, y, 1, 2);
        ctx.fillRect(w / 2 + 30, y, 1, 2);
    }
}

drawTrace();
drawTicks('ticks', -8, 10, '#777');
drawTicks('range_ticks', -60, 8.73, '#777');
drawWaterfall();
```
